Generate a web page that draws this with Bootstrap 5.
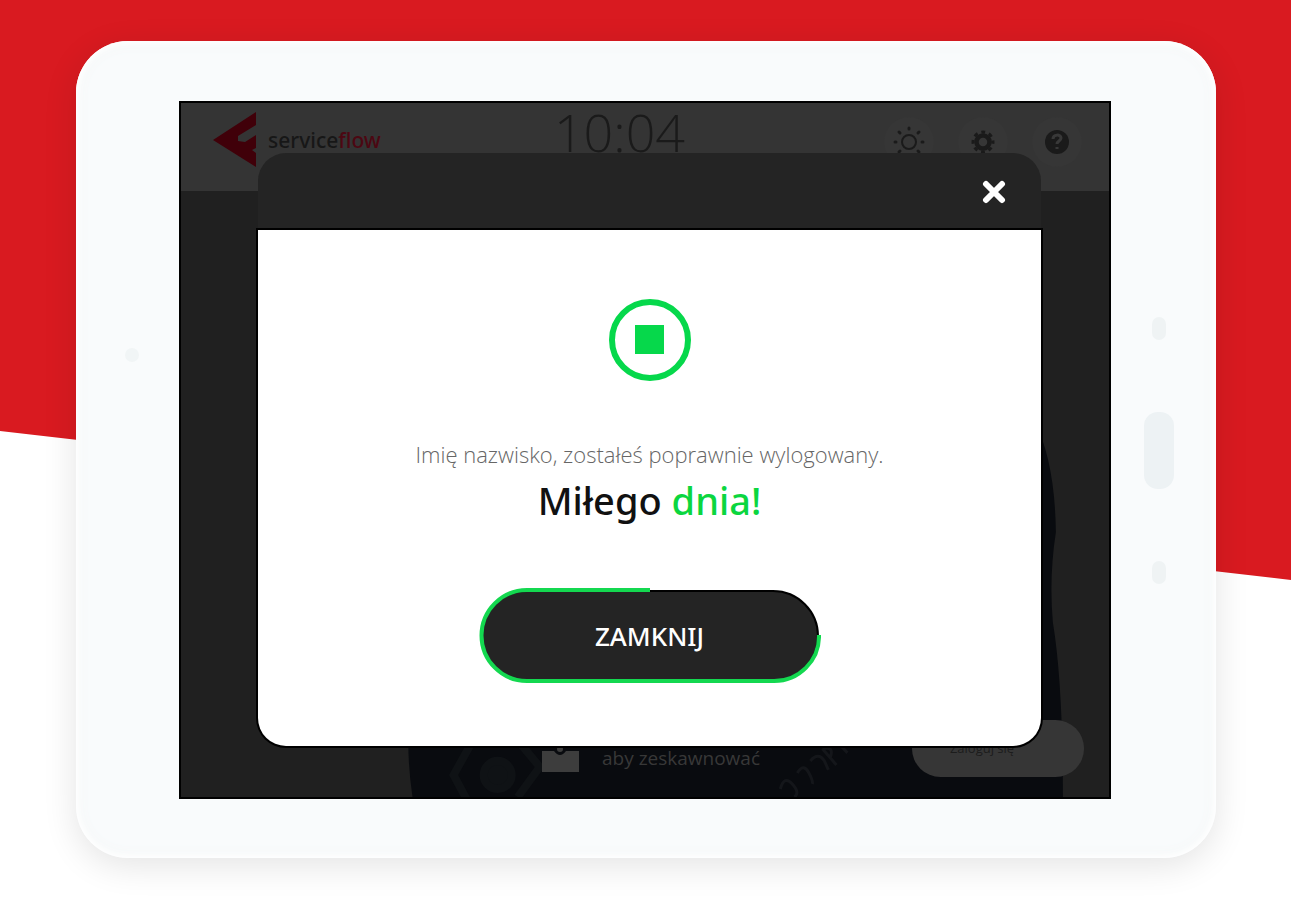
<!DOCTYPE html>
<html lang="pl">
<head>
<meta charset="utf-8">
<meta name="viewport" content="width=device-width, initial-scale=1">
<title>serviceflow</title>
<link href="https://cdn.jsdelivr.net/npm/bootstrap@5.3.0/dist/css/bootstrap.min.css" rel="stylesheet">
<style>
body { font-family: "Open Sans", "Noto Sans", sans-serif; background: #fff; }
.stage { padding: 41px 75px 42px 76px; isolation: isolate; }
/* slanted brand band behind the device */
.stage::before { content: ""; position: absolute; inset: 0 0 auto 0; height: 580px; z-index: -1; background: #d91a20; clip-path: polygon(0 0, 100% 0, 100% 100%, 0 calc(100% - 149px)); }
.tablet { display: grid; grid-template-columns: 103px minmax(0, 1fr) 105px; padding: 60px 0 59px; border-radius: 52px; background: #f9fbfc; box-shadow: inset 0 0 6px 3px #fff, inset 0 0 16px 2px #f4f7f7, 0 8px 34px rgba(0,0,0,.11); }
.camera { width: 14px; height: 14px; border-radius: 50%; background: #f1f5f6; margin: 0 0 190px 8px; }
.keys { gap: 72px; margin-left: -10px; }
.key-dot { width: 14px; height: 23px; border-radius: 7px; background: #eff3f4; }
.key-home { width: 30px; height: 77px; border-radius: 14px; background: #edf2f4; }
.screen { display: grid; background: #202020; border: 2px solid #000; overflow: hidden; }
.screen > * { grid-area: 1 / 1; min-width: 0; }
.app-top { display: grid; grid-template-columns: 1fr auto 1fr; height: 88px; background: #343434; padding: 0 27px 0 32px; color: #1d1d1d; }
.logo-link { gap: 12px; color: #171717; font: 500 21px/28px "Noto Sans", sans-serif; padding-top: 9px; align-self: start; }
.logo-link b { font-weight: 500; color: #4c0712; }
.clock { font-size: 52px; line-height: 58px; font-weight: 300; align-self: start; color: #1a1a1a; padding-right: 56px; }
.tool { width: 50px; height: 50px; padding: 9px; background: #363636; color: #1a1a1a; border-radius: 50%; }
.tools { gap: 24px; align-self: start; justify-content: end; padding-top: 14px; }
.hero { position: relative; overflow: hidden; }
.backdrop-art { position: absolute; inset: 0; width: 100%; height: 100%; }
.hint { position: relative; display: grid; grid-template-columns: 1fr auto 1fr; padding: 0 25px 20px; color: #383838; }
.hint p { gap: 23px; font-size: 19px; line-height: 24px; padding: 0 0 4px 12px; }
.start-btn { width: 172px; height: 57px; border-radius: 29px; background: #363636; color: #1c1c1c; font-size: 13px; padding: 0 32px 0 0; }
.overlay-pane { position: relative; padding: 50px 68px 51px 77px; }
.dialog-box { height: 100%; }
.dialog-top { height: 77px; padding: 2px 31px 0; border-radius: 28px 28px 0 0; background: #242424; border-bottom: 2px solid #000; }
.close-btn { color: #fff; width: 32px; height: 32px; }
.dialog-main { background: #fff; border-radius: 0 0 28px 28px; box-shadow: 0 0 0 2px #000; padding: 69px 24px 62px; }
.note { font-size: 22px; line-height: 28px; font-weight: 300; color: #666; margin-top: 59px; }
.wish { font-family: "Noto Sans", sans-serif; font-size: 38px; line-height: 52px; font-weight: 500; color: #111; margin: 6px 0 62px; }
.wish span { color: #0bd63f; }
.shut-btn { width: 342px; height: 96px; font-family: "Noto Sans", sans-serif; font-size: 26px; font-weight: 500; color: #fff; }
.shut-btn svg { position: absolute; inset: 0; z-index: -1; }
</style>
</head>
<body>
<main class="stage position-relative min-vh-100">
  <div class="tablet">
    <div class="d-flex align-items-center justify-content-center"><span class="camera"></span></div>
    <div class="screen">
      <div class="d-flex flex-column">
        <header class="app-top">
          <a href="#" class="logo-link d-flex align-items-center text-decoration-none">
            <svg width="43" height="56" viewBox="0 0 43 56" aria-hidden="true"><path fill="#400009" d="M43 0v13L25 24v5l7 1 11-7v13l-4 2 4 3v14L0 28z"/></svg>
            <span>service<b>flow</b></span>
          </a>
          <div class="clock">10:04</div>
          <div class="tools d-flex">
            <button type="button" class="tool btn border-0" aria-label="Jasność"><svg width="32" height="32" viewBox="0 0 32 32" fill="none" stroke="currentColor" stroke-width="2" stroke-linecap="round"><circle cx="16" cy="16" r="7"/><path stroke-width="3" d="M16 2v1M16 29v1M2 16h1M29 16h1M6 6l1 1M25 25l1 1M6 26l1-1M25 7l1-1"/></svg></button>
            <button type="button" class="tool btn border-0" aria-label="Ustawienia"><svg width="32" height="32" viewBox="0 0 32 32" fill="none" stroke="currentColor"><circle cx="16" cy="16" r="6.5" stroke-width="4.5"/><circle cx="16" cy="16" r="10" stroke-width="3" stroke-dasharray="3.9 3.95" stroke-dashoffset="2"/></svg></button>
            <button type="button" class="tool btn border-0" aria-label="Pomoc"><svg width="32" height="32" viewBox="0 0 32 32"><circle cx="16" cy="16" r="12" fill="currentColor"/><path d="M12 13c0-5 8-5 8-1 0 3-4 3-4 6M16 21v2" fill="none" stroke="#383838" stroke-width="3"/></svg></button>
          </div>
        </header>
        <section class="hero flex-grow-1 d-flex flex-column justify-content-end">
          <svg class="backdrop-art" viewBox="0 0 926 604" preserveAspectRatio="none" aria-hidden="true">
            <path fill="#090b0f" d="M231 604Q226 570 227 540L300 250 852 230Q872 270 873 340 866 385 870 430 880 490 880 604z"/>
            <g fill="none" stroke="#0f1215" stroke-width="8"><circle cx="316" cy="582" r="14" fill="#0f1215"/><path d="M290 550l-18 32 16 30M338 550l20 24-22 30"/></g>
            <path fill="none" stroke="#14161a" stroke-width="3" d="M598 596q4-14 12-5t2 13M615 580q6-10 11-1t4 12M628 568q8-9 14 0l4 9M640 556l14 16M640 556q12-3 8 8M652 546l13 14M652 546l10-6M658 552l9-6"/>
          </svg>
          <div class="hint align-items-end">
            <span></span>
            <p class="d-flex align-items-center mb-0"><svg width="37" height="30" viewBox="0 0 37 30" aria-hidden="true"><path fill="#3d3d3d" d="M0 8h12q6 8 12 0h13v21H0z"/><circle cx="18" cy="6" r="3" fill="#3d3d3d"/></svg>aby zeskawnować</p>
            <button type="button" class="start-btn btn border-0 ms-auto">Zaloguj się</button>
          </div>
        </section>
      </div>
      <div class="overlay-pane">
        <div class="dialog-box d-flex flex-column" role="dialog" aria-modal="true" aria-labelledby="wish">
          <div class="dialog-top d-flex align-items-center justify-content-end">
            <button type="button" class="close-btn btn border-0 p-0 d-flex align-items-center justify-content-center" aria-label="Zamknij okno"><svg width="24" height="24" viewBox="0 0 24 24" stroke="currentColor" stroke-width="6" stroke-linecap="round"><path d="M4 4l16 16M20 4L4 20"/></svg></button>
          </div>
          <div class="dialog-main flex-grow-1 d-flex flex-column align-items-center text-center">
            <svg width="82" height="82" viewBox="0 0 82 82" aria-hidden="true"><circle cx="41" cy="41" r="38" fill="none" stroke="#06d84b" stroke-width="6"/><path fill="#06d84b" d="M26 26h29v29H26z"/></svg>
            <p class="note mb-0">Imię nazwisko, zostałeś poprawnie wylogowany.</p>
            <h1 class="wish" id="wish">Miłego <span>dnia!</span></h1>
            <button type="button" class="shut-btn btn border-0 p-0 position-relative z-1"><svg width="342" height="96" viewBox="0 0 342 96" aria-hidden="true"><rect x="3" y="3" width="336" height="90" rx="45" fill="#242424" stroke="#000" stroke-width="2"/><path fill="none" stroke="#14d850" stroke-width="4" d="M171 2H48a45 45 0 0 0 0 91H294a45 45 0 0 0 46-46"/></svg>ZAMKNIJ</button>
          </div>
        </div>
      </div>
    </div>
    <div class="keys d-flex flex-column align-items-center justify-content-center">
      <span class="key-dot"></span><span class="key-home"></span><span class="key-dot"></span>
    </div>
  </div>
</main>
<script src="https://cdn.jsdelivr.net/npm/bootstrap@5.3.0/dist/js/bootstrap.bundle.min.js"></script>
</body>
</html>
